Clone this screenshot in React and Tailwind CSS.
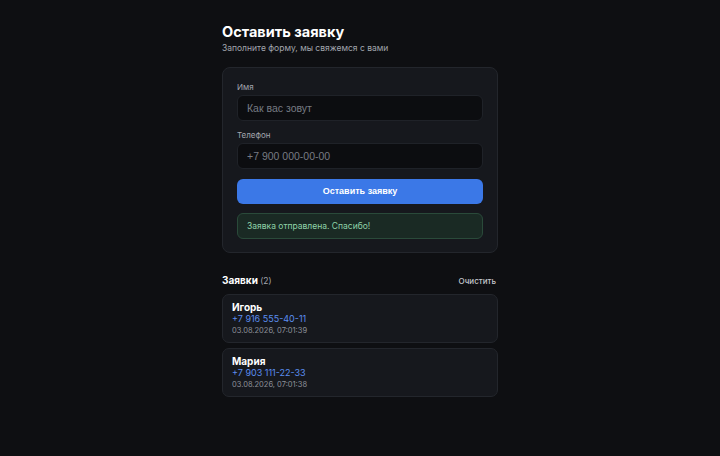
import { useState } from 'react';

const initialLeads = [
  { name: 'Игорь', phone: '+7 916 555-40-11', date: '03.08.2026, 07:01:39' },
  { name: 'Мария', phone: '+7 903 111-22-33', date: '03.08.2026, 07:01:38' },
];

function Field({ label, placeholder }) {
  return (
    <label className="flex flex-col gap-[2px]">
      <span className="text-[8px] leading-[12px] text-[#a3a7af]">{label}</span>
      <input
        type="text"
        placeholder={placeholder}
        className="h-[26px] w-full rounded-[6px] border border-[#1f2228] bg-[#0c0d10] px-[9px] font-['Liberation_Sans',Arial,sans-serif] text-[10.5px] text-white outline-none placeholder:text-[#777b83]"
      />
    </label>
  );
}

export default function App() {
  const [leads, setLeads] = useState(initialLeads);

  return (
    <div className="flex min-h-screen justify-center bg-[#0e0f12] pt-[22px] font-['Inter',sans-serif] text-white">
      <div className="flex w-[276px] flex-col">
        <h1 className="text-[14.5px] font-bold leading-[20px]">Оставить заявку</h1>
        <p className="text-[8.5px] leading-[12px] text-[#a2a6ae]">Заполните форму, мы свяжемся с вами</p>

        <div className="mt-[13px] flex flex-col rounded-[8px] border border-[#23262c] bg-[#16181d] px-[14px] pb-[13px] pt-[13px]">
          <div className="flex flex-col gap-[8px]">
            <Field label="Имя" placeholder="Как вас зовут" />
            <Field label="Телефон" placeholder="+7 900 000-00-00" />
          </div>
          <button
            type="button"
            className="mt-[10px] h-[25px] rounded-[6px] bg-[#3b78e7] font-['Liberation_Sans',Arial,sans-serif] text-[9px] font-bold text-white"
          >
            Оставить заявку
          </button>
          <div className="mt-[9px] flex h-[26px] items-center rounded-[6px] border border-[#2a4a3a] bg-[#1a2a24] px-[9px] text-[8.5px] text-[#8fd3a8]">
            Заявка отправлена. Спасибо!
          </div>
        </div>

        <div className="mt-[20px] flex items-center justify-between">
          <h2 className="text-[10px] font-bold leading-[14px]">
            Заявки <span className="text-[8.5px] font-normal text-[#a3a7af]">(2)</span>
          </h2>
          <button
            type="button"
            onClick={() => setLeads([])}
            className="pr-[2px] text-[8px] font-medium text-[#c3c6cc]"
          >
            Очистить
          </button>
        </div>

        <div className="mt-[6px] flex flex-col gap-[5px]">
          {leads.map((lead) => (
            <div
              key={lead.phone}
              className="flex h-[49px] flex-col justify-center rounded-[7px] border border-[#23262c] bg-[#16181d] px-[9px]"
            >
              <div className="text-[10px] font-bold leading-[12px]">{lead.name}</div>
              <div className="text-[9px] leading-[12px] text-[#5b8ef0]">{lead.phone}</div>
              <div className="text-[7.5px] leading-[11px] text-[#8d9199]">{lead.date}</div>
            </div>
          ))}
        </div>
      </div>
    </div>
  );
}
